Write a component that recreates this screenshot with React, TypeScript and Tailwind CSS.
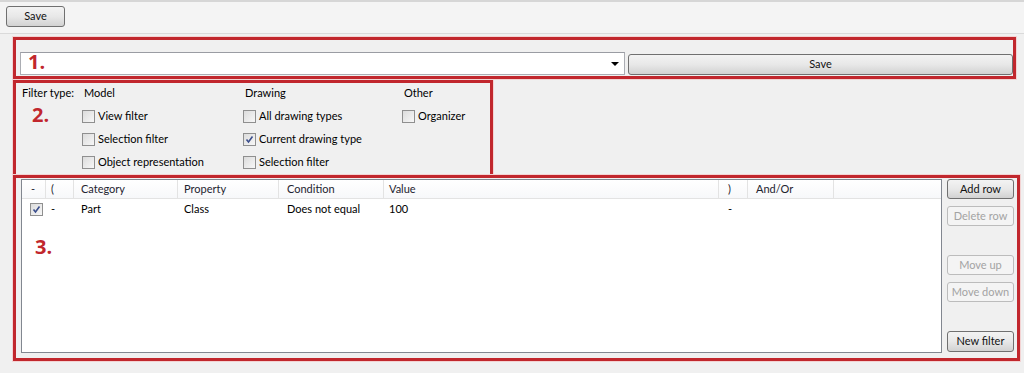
import React from "react";

const font = "font-['Segoe_UI',Lato,'Liberation_Sans',sans-serif] text-[11px]";
const redBox = "border-[3px] border-[#c1272d] shadow-[0_0_0_1px_#f3d3d3]";
const tag = "absolute font-['Open_Sans',sans-serif] font-bold text-[20px] leading-none text-[#c1272d]";

const btnOn =
  "flex items-center justify-center rounded-[3px] border border-[#707070] bg-linear-to-b from-[#f3f3f3] via-[#e8e8e8] to-[#d2d2d2] text-[#111]";
const btnOff =
  "flex items-center justify-center rounded-[3px] border border-[#bcbcbc] bg-[#f4f4f4] text-[#a3a3a3]";

function Check({ checked = false }: { checked?: boolean }) {
  return (
    <span className="flex h-[13px] w-[13px] shrink-0 items-center justify-center border border-[#8f8f8f] bg-linear-to-br from-[#dcdcdc] to-[#f7f7f7]">
      {checked && (
        <svg width="9" height="9" viewBox="0 0 9 9">
          <path d="M1.5 4.5 L3.5 7 L7.5 1.5" fill="none" stroke="#3b4e8c" strokeWidth="1.6" />
        </svg>
      )}
    </span>
  );
}

const filterRows = [
  ["View filter", "All drawing types", "Organizer"],
  ["Selection filter", "Current drawing type", ""],
  ["Object representation", "Selection filter", ""],
];

const columns = [
  { label: "-", w: "w-[24px]", pad: "pl-[9px]" },
  { label: "(", w: "w-[28px]", pad: "pl-[5px]" },
  { label: "Category", w: "w-[104px]", pad: "pl-[7px]" },
  { label: "Property", w: "w-[101px]", pad: "pl-[6px]" },
  { label: "Condition", w: "w-[105px]", pad: "pl-[8px]" },
  { label: "Value", w: "w-[335px]", pad: "pl-[5px]" },
  { label: ")", w: "w-[29px]", pad: "pl-[9px]" },
  { label: "And/Or", w: "w-[86px]", pad: "pl-[8px]" },
];

export default function App() {
  return (
    <div className={`h-[373px] w-[1024px] overflow-hidden bg-[#f0f0f0] text-black ${font}`}>
      {/* toolbar */}
      <div className="h-[34px] border-t-[2px] border-b border-t-[#d6d6d6] border-b-[#dadada] bg-[#f4f4f4] pl-[6px] pt-[4px]">
        <button className={`${btnOn} h-[21px] w-[59px]`}>Save</button>
      </div>

      {/* 1. */}
      <div className={`relative ml-[13px] mt-[3px] flex h-[42px] w-[1003px] items-end gap-[3px] pb-[1px] pl-[4px] ${redBox}`}>
        <div className="relative flex h-[23px] w-[605px] items-center border border-[#abadb3] border-t-[#9a9ca3] bg-white">
          <span className="absolute right-[5px] top-[9px] h-0 w-0 border-x-[4px] border-t-[4px] border-x-transparent border-t-black" />
        </div>
        <button className={`${btnOn} h-[21px] flex-1`}>Save</button>
        <span className={`${tag} left-[12px] top-[12px]`}>1.</span>
      </div>

      {/* 2. */}
      <div className={`relative ml-[13px] mt-[1px] h-[97px] w-[480px] ${redBox}`}>
        <div className="grid grid-cols-[66px_161px_159px_1fr]">
          <div className="flex h-[20px] items-center pl-[6px]">Filter type:</div>
          <div className="flex h-[20px] items-center pl-[2px]">Model</div>
          <div className="flex h-[20px] items-center pl-[2px]">Drawing</div>
          <div className="flex h-[20px] items-center pl-[2px]">Other</div>
          <div className="col-span-4 h-[2px]" />
          {filterRows.map((row) => (
            <React.Fragment key={row[0]}>
              <div className="h-[23px]" />
              {row.map((label, i) => (
                <div key={i} className="flex h-[23px] items-center gap-[3px]">
                  {label && (
                    <>
                      <Check checked={label === "Current drawing type"} />
                      <span>{label}</span>
                    </>
                  )}
                </div>
              ))}
            </React.Fragment>
          ))}
        </div>
        <span className={`${tag} left-[16px] top-[22px]`}>2.</span>
      </div>

      {/* 3. */}
      <div className={`relative ml-[13px] -mt-[2px] flex h-[186px] w-[1007px] gap-[5px] pb-[5px] pl-[5px] pt-[1px] ${redBox}`}>
        <div className="flex w-[921px] flex-col border border-[#828790] bg-white">
          <div className="flex h-[19px] border-b border-[#e3e3e3] bg-linear-to-b from-white to-[#f7f8fa] text-[#1e2430]">
            {columns.map((c) => (
              <div key={c.label} className={`flex items-center border-r border-[#e3e3e3] ${c.w} ${c.pad}`}>
                {c.label}
              </div>
            ))}
          </div>
          <div className="flex h-[21px]">
            <div className="flex w-[24px] items-center pl-[8px]">
              <Check checked />
            </div>
            <div className="flex w-[28px] items-center pl-[5px]">-</div>
            <div className="flex w-[104px] items-center pl-[7px]">Part</div>
            <div className="flex w-[101px] items-center pl-[6px]">Class</div>
            <div className="flex w-[105px] items-center pl-[8px]">Does not equal</div>
            <div className="flex w-[335px] items-center pl-[5px]">100</div>
            <div className="flex w-[29px] items-center pl-[9px]">-</div>
          </div>
        </div>
        <div className="flex w-[67px] flex-col">
          <button className={`${btnOn} h-[20px]`}>Add row</button>
          <button className={`${btnOff} mt-[7px] h-[20px]`}>Delete row</button>
          <button className={`${btnOff} mt-[29px] h-[20px]`}>Move up</button>
          <button className={`${btnOff} mt-[7px] h-[20px]`}>Move down</button>
          <button className={`${btnOn} mt-[29px] h-[21px]`}>New filter</button>
        </div>
        <span className={`${tag} left-[19px] top-[59px]`}>3.</span>
      </div>
    </div>
  );
}
